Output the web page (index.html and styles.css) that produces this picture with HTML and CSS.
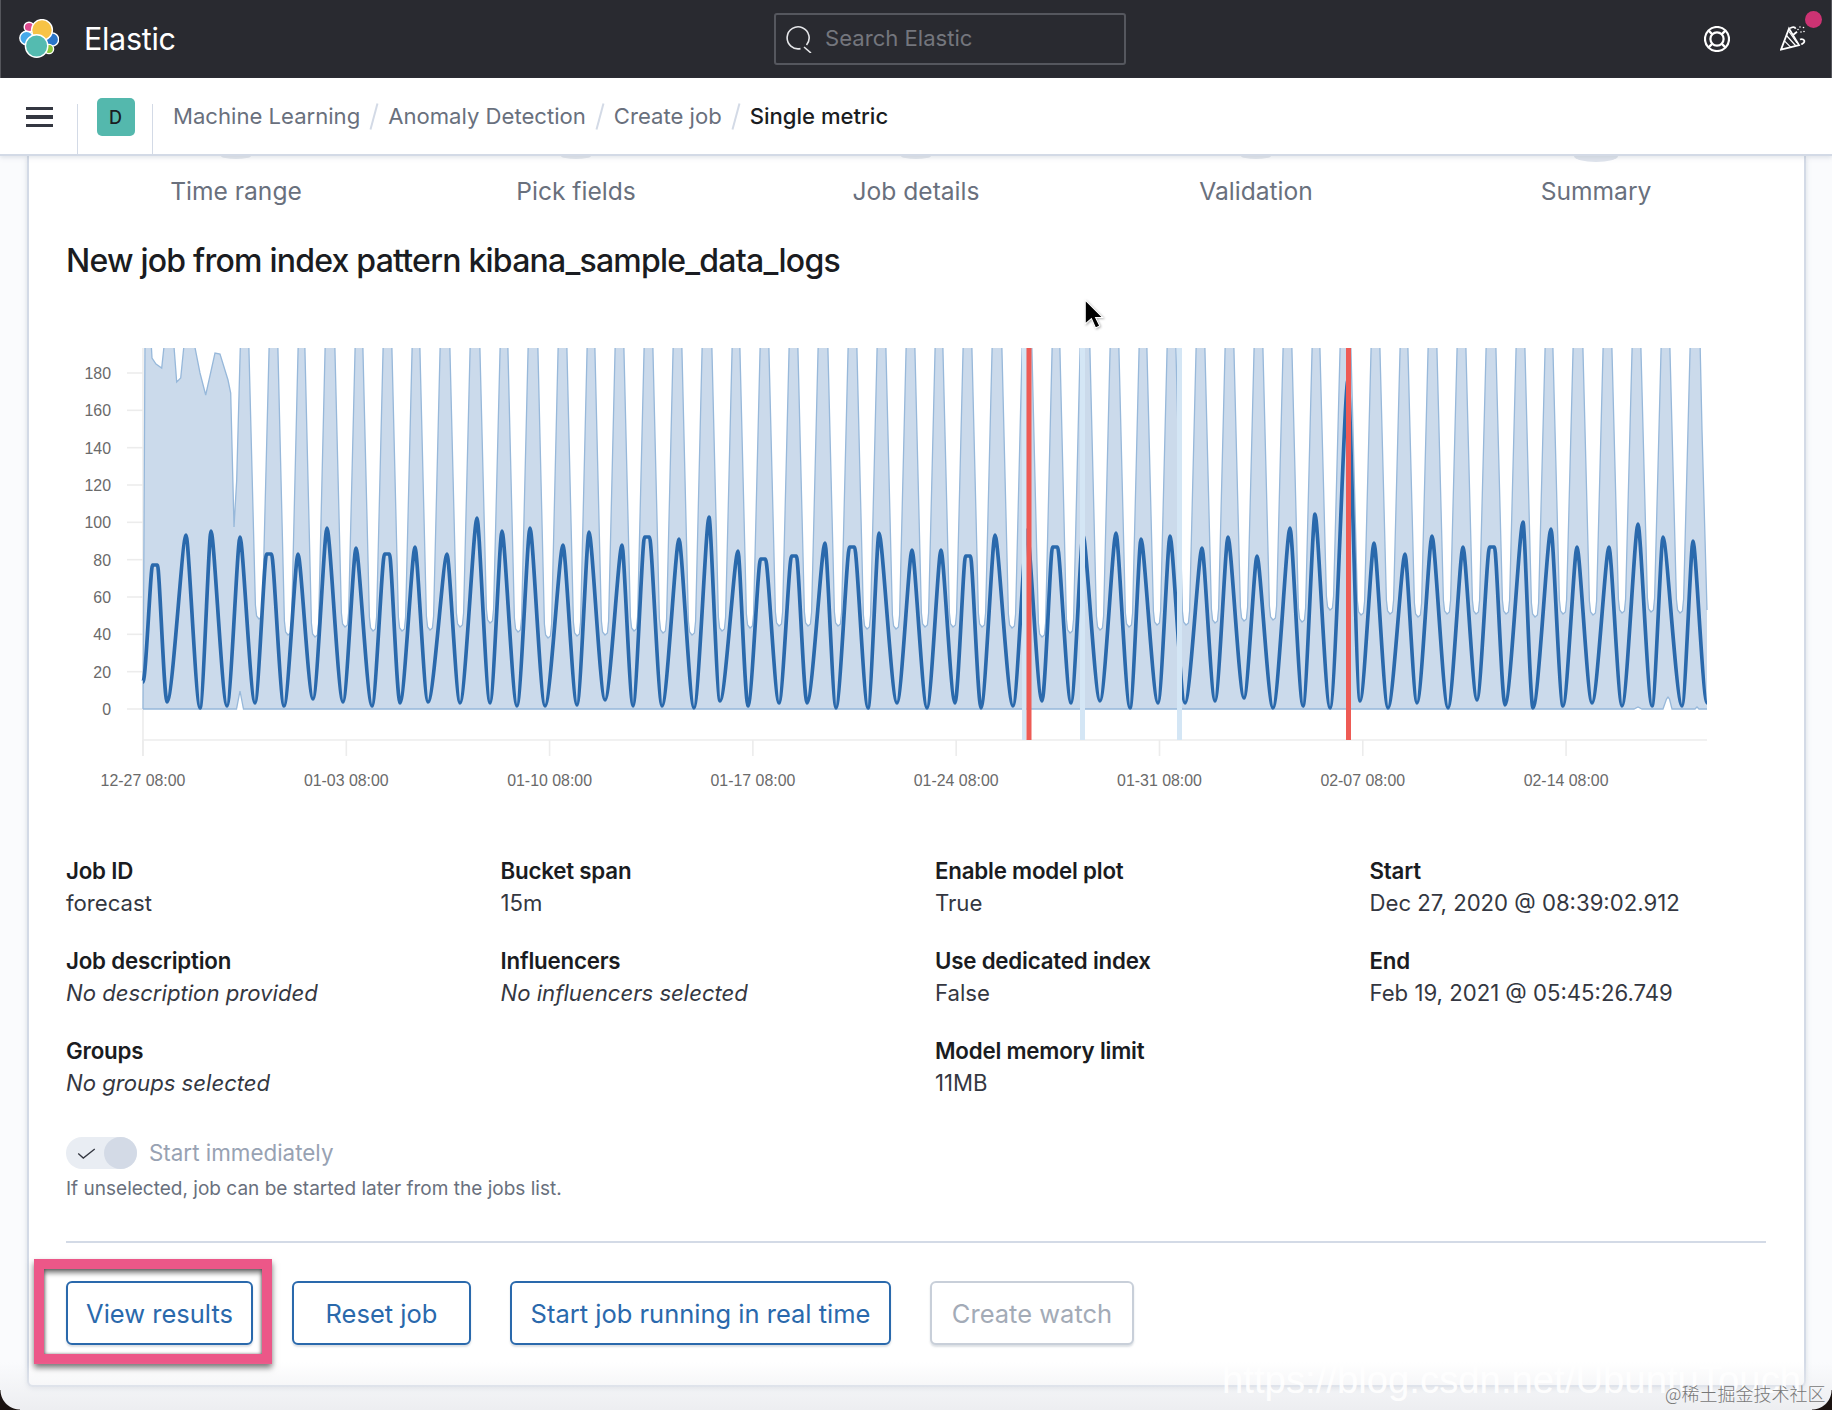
FILE: index.html
```html
<!DOCTYPE html>
<html lang="en">
<head>
<meta charset="utf-8">
<title>Elastic</title>
<link rel="stylesheet" href="styles.css">
</head>
<body>
<div class="page">
  <header class="topbar">
    <div class="brand">
      <svg class="logo" viewBox="0 0 40 40">
        <g stroke="#fff" stroke-width="1.4">
          <circle cx="10" cy="8" r="4.8" fill="#dd4a8f"/>
          <circle cx="7.6" cy="19" r="6.8" fill="#46a9ea"/>
          <circle cx="33" cy="20.5" r="6.6" fill="#2a76c9"/>
          <circle cx="30" cy="30" r="4.6" fill="#8cc63f"/>
          <circle cx="23" cy="11" r="10.4" fill="#f7c346"/>
          <circle cx="17.6" cy="27" r="11.2" fill="#54bbb0"/>
        </g>
      </svg>
      <span class="brand-name">Elastic</span>
    </div>
    <div class="search">
      <svg class="search-icon" viewBox="0 0 28 28">
        <path d="M15.5 23.6a11 11 0 1 1 6-3.6"/>
        <path d="M19 22l7 6"/>
      </svg>
      <span class="search-text">Search Elastic</span>
    </div>
    <div class="top-actions">
      <svg class="top-icon top-icon-help" viewBox="0 0 26 26">
        <circle cx="13" cy="13" r="12"/>
        <circle cx="13" cy="13" r="6.6"/>
        <path d="M4.6 4.6l3.8 3.8M21.4 4.6l-3.8 3.8M4.6 21.4l3.8-3.8M21.4 21.4l-3.8-3.8"/>
      </svg>
      <span class="party">
        <svg class="top-icon" viewBox="0 0 26 26">
          <path d="M1 23.6L9 2.5l10 16.6z"/>
          <path d="M4.4 14.8l7 7M6.5 9.5l9 10M8.6 5l8.4 12" stroke-width="1.2"/>
          <path d="M10 2.4c2-1.800 5-1.800 5.600.3M13 9l4-3.300M20 13.500c2-1 5 0 4.200 2.500-.4 1.400-2.400 1.400-2.800 2.600"/>
          <path d="M18 3.500h.01M21 6h.01M23.500 1.500h.01M20 1h.01M24 5.500h.01" stroke-width="1.600" stroke-linecap="round"/>
        </svg>
        <span class="party-dot"></span>
      </span>
    </div>
  </header>

  <nav class="crumbbar">
    <div class="menu-cell">
      <span class="burger"><i></i><i></i><i></i></span>
    </div>
    <div class="space-cell"><span class="space-badge">D</span></div>
    <div class="crumbs">
      <span>Machine Learning</span><span class="slash"></span>
      <span>Anomaly Detection</span><span class="slash"></span>
      <span>Create job</span><span class="slash"></span>
      <span class="crumb-current">Single metric</span>
    </div>
  </nav>

  <main class="card">
    <ol class="steps">
      <li class="step">Time range</li>
      <li class="step">Pick fields</li>
      <li class="step">Job details</li>
      <li class="step">Validation</li>
      <li class="step step-current">Summary</li>
    </ol>

    <h2 class="job-title">New job from index pattern kibana_sample_data_logs</h2>

    <svg id="chart" class="chart" viewBox="66 320 1700 480" width="1700" height="480"></svg>

    <section class="summary">
      <div class="summary-col">
        <dl><dt>Job ID</dt><dd>forecast</dd></dl>
        <dl><dt>Job description</dt><dd class="none">No description provided</dd></dl>
        <dl><dt>Groups</dt><dd class="none">No groups selected</dd></dl>
      </div>
      <div class="summary-col">
        <dl><dt>Bucket span</dt><dd>15m</dd></dl>
        <dl><dt>Influencers</dt><dd class="none">No influencers selected</dd></dl>
      </div>
      <div class="summary-col">
        <dl><dt>Enable model plot</dt><dd>True</dd></dl>
        <dl><dt>Use dedicated index</dt><dd>False</dd></dl>
        <dl><dt>Model memory limit</dt><dd>11MB</dd></dl>
      </div>
      <div class="summary-col">
        <dl><dt>Start</dt><dd>Dec 27, 2020 @ 08:39:02.912</dd></dl>
        <dl><dt>End</dt><dd>Feb 19, 2021 @ 05:45:26.749</dd></dl>
      </div>
    </section>

    <div class="switch-row">
      <span class="switch">
        <svg class="switch-check" viewBox="0 0 20 12"><path d="M1 6l5.500 5L19 1"/></svg>
        <span class="switch-knob"></span>
      </span>
      <span class="switch-label">Start immediately</span>
    </div>
    <p class="help">If unselected, job can be started later from the jobs list.</p>

    <hr class="rule">

    <div class="actions">
      <span class="highlighted"><button class="btn btn-view">View results</button></span>
      <button class="btn btn-reset">Reset job</button>
      <button class="btn btn-start">Start job running in real time</button>
      <button class="btn btn-watch">Create watch</button>
    </div>
  </main>

  <svg class="cursor" viewBox="0 0 20 30"><path d="M2 1v23l6-5 4 9 4-2-4-8h7z"/></svg>

  <div class="fade"></div>
  <div class="wm-url">https://blog.csdn.net/UbuntuTouch</div>
  <div class="wm-cn">@稀土掘金技术社区</div>
  <span class="corner corner-left"></span>
  <span class="corner corner-right"></span>
</div>
<script src="chart.js"></script>
</body>
</html>
```
FILE: styles.css
```css
* { box-sizing: border-box; }
html, body { margin: 0; padding: 0; }
body {
  width: 1832px;
  height: 1410px;
  overflow: hidden;
  background: #fafbfd;
  font-family: Inter, "Noto Sans", sans-serif;
  color: #343741;
}
.page { position: relative; width: 1832px; height: 1410px; overflow: hidden; }

/* top bar */
.topbar {
  display: flex;
  align-items: center;
  height: 78px;
  background: #292a30;
  border-left: 1px solid #55565c;
  border-right: 1px solid #55565c;
}
.brand { display: flex; align-items: center; width: 773px; padding-left: 18px; }
.logo { width: 40px; height: 40px; }
.brand-name { margin-left: 25px; padding-bottom: 2px; font-size: 30.500px; font-weight: 400; color: #fff; letter-spacing: -0.3px; }
.search {
  display: flex;
  align-items: center;
  width: 352px;
  height: 52px;
  padding-left: 9px;
  border: 2px solid #55575e;
  border-radius: 3px;
}
.search-icon { width: 28px; height: 28px; fill: none; stroke: #e6e7ea; stroke-width: 1.6; }
.search-text { margin-left: 12px; padding-bottom: 2px; font-size: 22.100px; color: #74767d; }
.top-actions { flex: 1; display: flex; justify-content: flex-end; gap: 50px; padding-right: 25px; }
.top-icon { display: block; width: 26px; height: 26px; fill: none; stroke: #fff; stroke-width: 1.8; }
.top-icon-help { stroke-width: 2.2; }
.party { position: relative; display: block; }
.party-dot {
  position: absolute;
  top: -15px;
  left: 25px;
  width: 17px;
  height: 17px;
  border-radius: 50%;
  background: #cc3373;
}

/* breadcrumb bar */
.crumbbar {
  position: relative;
  z-index: 2;
  display: flex;
  height: 78px;
  background: #fff;
  border-bottom: 2px solid #d3dae6;
  box-shadow: 0 2px 4px rgba(152, 162, 179, .25);
}
.menu-cell { width: 78px; display: flex; align-items: center; justify-content: center; position: relative; }
.menu-cell::after, .space-cell::after {
  content: "";
  position: absolute;
  right: 0;
  top: 26px;
  bottom: 0;
  width: 1.5px;
  background: #d3dae6;
}
.burger { display: flex; flex-direction: column; gap: 5px; width: 27px; margin-left: 1px; margin-top: 2px; }
.burger i { display: block; height: 3.5px; background: #343741; }
.space-cell { position: relative; width: 75px; display: flex; justify-content: center; padding-top: 20px; }
.space-badge {
  display: flex;
  align-items: center;
  justify-content: center;
  width: 38px;
  height: 38px;
  border-radius: 5px;
  background: #54b8ad;
  font-size: 18px;
  font-weight: 500;
  color: #1a1c21;
}
.crumbs { display: flex; align-items: center; gap: 13.250px; padding-left: 20px; font-size: 22.100px; color: #69707d; height: 76px; }
.crumb-current { color: #1a1c21; font-weight: 500; }
.slash { width: 1.5px; height: 27px; background: #d3dae6; transform: rotate(15deg); }

/* card */
.card {
  margin: 0 26px 0 27px;
  padding: 19px 38px 40px 37px;
  background: #fff;
  border: 2px solid #d3dae6;
  border-top: 0;
  border-radius: 0 0 6px 6px;
  box-shadow: 0 2px 5px rgba(152, 162, 179, .35);
}
.steps { display: grid; grid-template-columns: repeat(5, 1fr); margin: 0; padding: 0; list-style: none; }
.step { position: relative; text-align: center; font-size: 24.600px; line-height: 32px; color: #69707d; }
.step::before {
  content: "";
  position: absolute;
  left: calc(50% - 15px);
  top: -19px;
  width: 30px;
  height: 3px;
  border-radius: 0 0 50% 50% / 0 0 100% 100%;
  background: #e4e8ee;
}
.step-current::before { left: calc(50% - 22px); width: 44px; height: 6px; background: #dfe4ec; }
.job-title { margin: 34px 0 0; font-size: 32px; line-height: 40px; font-weight: 500; color: #1a1c21; letter-spacing: -0.77px; }
.chart { display: block; margin-top: 39px; }

/* chart internals (classes applied by chart.js) */
.grid-line { stroke: #ececec; stroke-width: 1.6; fill: none; }
.band-fill { fill: #cbdaeb; stroke: none; }
.band-edge { fill: none; stroke: #97b8da; stroke-width: 1.3; }
.metric { fill: none; stroke: #2a69ac; stroke-width: 3.700; stroke-linejoin: round; }
.mark-red { fill: #ee5b55; }
.mark-blue { fill: #d4e6f5; }
.axis-label { font-family: "Liberation Sans", Arial, sans-serif; font-size: 15.900px; fill: #6a6a6a; }
.axis-y { text-anchor: end; }
.axis-x { text-anchor: middle; }

/* summary */
.summary { display: grid; grid-template-columns: repeat(4, 395.500px); column-gap: 39px; margin-top: 55px; }
.summary-col { display: flex; flex-direction: column; gap: 26px; }
.summary-col dl { margin: 0; }
.summary-col dt { font-size: 22.300px; line-height: 32px; font-weight: 600; color: #1a1c21; letter-spacing: -0.2px; }
.summary-col dd { margin: 0; font-size: 22.150px; line-height: 32px; color: #343741; }
.summary-col dd.none { font-style: italic; }

/* switch */
.switch-row { display: flex; align-items: center; gap: 12px; margin-top: 38px; }
.switch {
  position: relative;
  display: block;
  width: 71px;
  height: 32px;
  border-radius: 16px;
  background: #e9edf3;
}
.switch-check { position: absolute; left: 11px; top: 11px; width: 19px; height: 11px; fill: none; stroke: #343741; stroke-width: 1.4; }
.switch-knob { position: absolute; right: 0; top: 0; width: 33px; height: 32px; border-radius: 50%; background: #d3dae6; }
.switch-label { font-size: 22.400px; line-height: 32px; color: #98a2b3; }
.help { margin: 8px 0 0; font-size: 19.050px; line-height: 24px; color: #69707d; }
.rule { margin: 40px 0 0; height: 2px; border: 0; background: #d3dae6; }

/* actions */
.actions { display: flex; gap: 39px; margin-top: 38px; }
.highlighted { position: relative; display: block; }
.highlighted::after {
  content: "";
  position: absolute;
  left: -32px;
  right: -19px;
  top: -22px;
  bottom: -19px;
  border: 10px solid #ec5788;
  box-shadow: 0 4px 6px rgba(0, 0, 0, .55), inset 0 4px 5px rgba(0, 0, 0, .5), inset -1px 0 3px rgba(0, 0, 0, .25), inset 1px 0 3px rgba(0, 0, 0, .25);
}
.btn {
  display: block;
  height: 64px;
  padding: 0;
  background: #fff;
  border: 2px solid #2a69ac;
  border-radius: 6px;
  font-family: inherit;
  font-size: 25.500px;
  color: #2a69ac;
  box-shadow: 0 2px 2px rgba(152, 162, 179, .35);
}
.btn-view { width: 187px; }
.btn-reset { width: 179px; }
.btn-start { width: 381px; }
.btn-watch { width: 204px; color: #a3abb7; border-color: #c8cfd9; }

/* overlays */
.cursor {
  position: absolute;
  left: 1083px;
  top: 299px;
  width: 21px;
  height: 31px;
  fill: #000;
  stroke: #fff;
  stroke-width: 1;
  filter: drop-shadow(1px 1px 1px rgba(0, 0, 0, .3));
}
.fade {
  position: absolute;
  left: 0;
  right: 0;
  bottom: 0;
  height: 48px;
  background: linear-gradient(rgba(236, 237, 240, 0), rgba(236, 237, 240, .95));
}
.wm-url {
  position: absolute;
  left: 1222px;
  top: 1358px;
  font-family: "Liberation Sans", Arial, sans-serif;
  font-size: 38.300px;
  line-height: 44px;
  color: rgba(255, 255, 255, .92);
  white-space: nowrap;
}
.wm-cn {
  position: absolute;
  left: 1665px;
  top: 1381px;
  font-family: "Noto Sans CJK SC", sans-serif;
  font-size: 18px;
  line-height: 24px;
  font-weight: 300;
  color: #777;
  white-space: nowrap;
}
.corner { position: absolute; bottom: 0; width: 20px; height: 20px; }
.corner-left { left: 0; background: radial-gradient(circle at 100% 0, transparent 19px, #1a1210 20px); }
.corner-right { right: 0; background: radial-gradient(circle at 0 0, transparent 19px, #1a1210 20px); }
```
FILE: chart.js
```js
(function () {
  var NS = 'http://www.w3.org/2000/svg';
  var svg = document.getElementById('chart');
  var TOP = 348, BASE = 709, AXIS = 740, LEFT = 143, RIGHT = 1707;

  function el(name, attrs, parent, text) {
    var node = document.createElementNS(NS, name);
    for (var k in attrs) node.setAttribute(k, attrs[k]);
    if (text !== undefined) node.textContent = text;
    (parent || svg).appendChild(node);
    return node;
  }

  /* peak x, peak y, next trough x, next trough y, flat top? */
  var cycles = [
    [155,565,167,702,1],[186,535,200,708],[211,531,227,706],[240,537,255,703],[269,554,284,706,1],
    [298,554,313,699],[327,528,343,702],[356,548,372,706],[387,554,400,703,1],[415,547,428,702],
    [447,554,460,703],[477,518,490,703],[502,531,517,706],[530,528,545,706],[563,545,577,705],
    [589,532,605,700],[622,545,633,706],[647,537,662,706,1],[679,539,694,708],[709,517,720,701],
    [738,551,748,706],[763,559,779,703,1],[794,556,807,703,1],[825,543,836,708],[852,547,868,708,1],
    [879,533,897,703],[912,550,927,708],[941,550,955,703],[968,556,981,708,1],[995,535,1013,706],
    [1027,530,1042,701],[1055,547,1071,703,1],[1083,535,1100,701],[1116,533,1130,708],[1141,539,1158,703],
    [1170,536,1185,703],[1202,548,1215,701],[1228,537,1244,698],[1257,556,1273,708],[1290,528,1303,706],
    [1315,514,1330,708],[1348,380,1360,701],[1374,543,1388,708],[1405,554,1417,703],[1432,536,1448,708],
    [1463,547,1477,700],[1492,547,1505,705,1],[1523,522,1533,708],[1551,529,1563,706],[1577,547,1592,703],
    [1609,547,1622,706],[1638,524,1652,706],[1663,537,1682,706],[1693,541,1707,703]
  ];

  /* x and y of the white gaps in the upper bound */
  var gaps = [
    [259,619],[288,635],[315,637],[345,627],[373,631],[402,631],[430,630],[460,627],[490,623],[518,632],
    [548,638],[577,636],[605,635],[634,631],[663,633],[692,635],[722,631],[750,628],[779,626],[808,626],
    [838,626],[867,629],[896,629],[925,627],[953,627],[982,627],[1012,628],[1042,637],[1070,633],[1100,630],
    [1129,627],[1157,625],[1186,625],[1215,623],[1244,621],[1273,620],[1302,622],[1330,610],[1361,615],[1390,614],
    [1418,617],[1447,614],[1476,614],[1506,614],[1535,617],[1563,614],[1593,615],[1622,613],[1651,612],[1680,613]
  ];

  var upper = [[143,709],[144,530],[145,340],[151,340],[152,358],[156,364],[161.7,368],[164.7,340],[173.5,340],
    [176.7,382],[180.7,378],[184.5,340],[193.5,340],[200,373],[205.7,395],[215,353],[220,354],[228,380],
    [230.7,393],[234,527],[236.7,480],[240.5,340]];
  gaps.forEach(function (g) {
    var x = g[0], y = g[1];
    upper.push([x - 10.3, 340], [x - 3.6, y - 14], [x - 2.4, y - 3], [x, y], [x + 2.4, y - 2], [x + 3.6, y - 14], [x + 10.3, 340]);
  });
  upper.push([1700, 340], [1702, 430], [1707, 610]);

  var lower = [[1707,709],[1699,709],[1697,707],[1695,709],[1672,709],[1669.500,699],[1668,697],[1666.500,699],
    [1663,709],[1642,709],[1638,707],[1634,709],[243.500,709],[240,691],[236.500,709],[143,709]];

  function pts(list) {
    return list.map(function (p) { return p[0] + ' ' + p[1]; }).join(' L');
  }

  var defs = el('defs', {});
  var clip = el('clipPath', { id: 'plot-clip' }, defs);
  el('rect', { x: LEFT - 2, y: TOP, width: RIGHT - LEFT + 6, height: 400 }, clip);

  /* ticks and axes */
  var values = [180, 160, 140, 120, 100, 80, 60, 40, 20, 0];
  values.forEach(function (v) {
    var y = BASE - v * (336 / 180);
    el('line', { class: 'grid-line', x1: 127, x2: LEFT, y1: y, y2: y });
    el('text', { class: 'axis-label axis-y', x: 111, y: y + 6 }, svg, String(v));
  });
  el('line', { class: 'grid-line', x1: LEFT, x2: LEFT, y1: TOP, y2: 756 });
  el('line', { class: 'grid-line', x1: LEFT, x2: RIGHT, y1: AXIS, y2: AXIS });
  ['12-27', '01-03', '01-10', '01-17', '01-24', '01-31', '02-07', '02-14'].forEach(function (d, i) {
    var x = LEFT + i * 203.3;
    el('line', { class: 'grid-line', x1: x, x2: x, y1: AXIS, y2: 756 });
    el('text', { class: 'axis-label axis-x', x: x, y: 786 }, svg, d + ' 08:00');
  });

  /* model bounds */
  var plot = el('g', { 'clip-path': 'url(#plot-clip)' });
  el('path', { class: 'band-fill', d: 'M' + pts(upper.concat(lower)) + ' Z' }, plot);
  el('path', { class: 'band-edge', d: 'M' + pts(upper) }, plot);
  el('path', { class: 'band-edge', d: 'M' + pts(lower) }, plot);

  /* metric line */
  var d = 'M143 682';
  var cx = 143, cy = 682;
  cycles.forEach(function (c) {
    var px = c[0], py = c[1], tx = c[2], ty = c[3], flat = c[4] ? 2.5 : 0;
    var inX = px - flat, outX = px + flat;
    var up = inX - cx, down = tx - outX;
    d += ' C' + (cx + up * 0.3) + ' ' + cy + ' ' + (inX - up * 0.2) + ' ' + py + ' ' + inX + ' ' + py;
    if (flat) d += ' L' + outX + ' ' + py;
    d += ' C' + (outX + down * 0.2) + ' ' + py + ' ' + (tx - down * 0.3) + ' ' + ty + ' ' + tx + ' ' + ty;
    cx = tx; cy = ty;
  });
  el('path', { class: 'metric', d: d }, plot);

  /* anomaly markers */
  [[1022, 4.500, 'mark-blue'], [1080, 5, 'mark-blue'], [1177, 5, 'mark-blue'],
   [1026.500, 5, 'mark-red'], [1346, 5, 'mark-red']].forEach(function (m) {
    el('rect', { class: m[2], x: m[0], y: TOP, width: m[1], height: AXIS - TOP }, svg);
  });
})();
```
